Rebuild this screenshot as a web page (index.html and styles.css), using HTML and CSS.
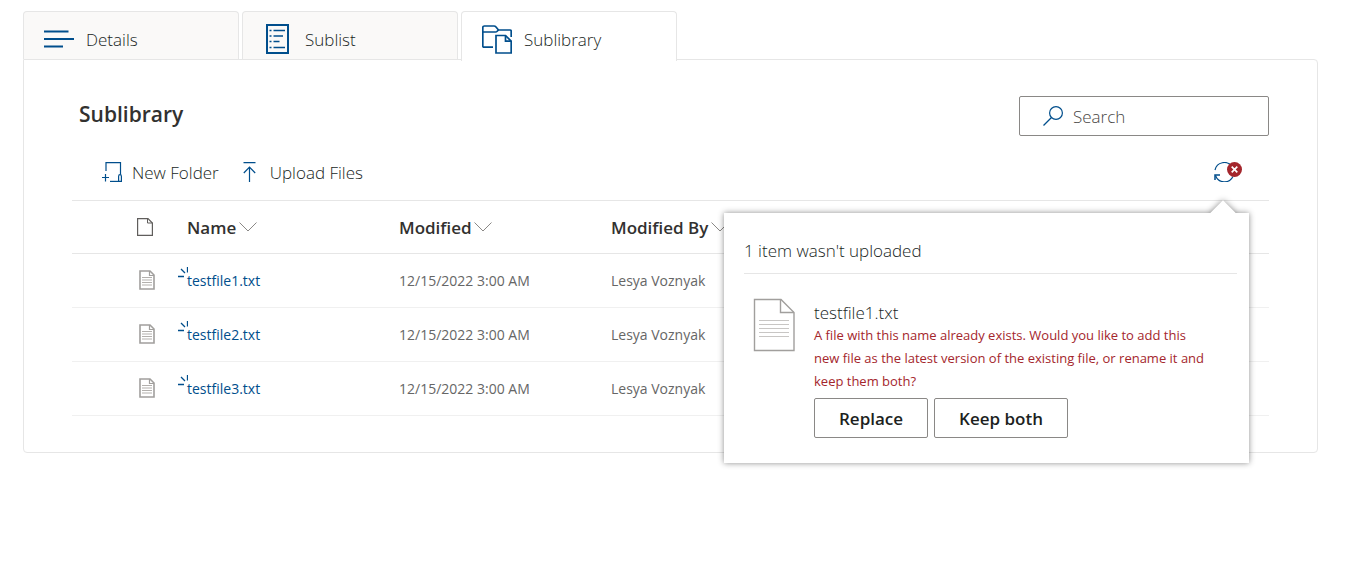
FILE: index.html
```html
<!DOCTYPE html>
<html lang="en">
<head>
    <meta charset="UTF-8">
    <meta name="viewport" content="width=device-width, initial-scale=1.0">
    <title>Sublibrary</title>
    <link rel="stylesheet" href="styles.css">
</head>
<body>

<!-- Shared icons -->
<svg class="sprite" aria-hidden="true">
    <symbol id="txt-file" viewBox="0 0 16 20">
        <path d="M1 1h10l4 4v14H1z" fill="#fff" stroke="#a19f9d" stroke-width="1.6"/>
        <path d="M10.500 1v4.500H15" fill="none" stroke="#a19f9d" stroke-width="1.2"/>
        <path d="M3 7.500h10M3 10h10M3 12.500h10M3 15h10" stroke="#b3b0ad"/>
    </symbol>
    <symbol id="new-item" viewBox="0 0 10 11">
        <path d="M9.500 0v5.500M3 2l4 4M0 9.500h6" fill="none" stroke="#004e8c" stroke-width="1.3"/>
    </symbol>
    <symbol id="chevron" viewBox="0 0 18 10">
        <path d="M.5.5L9 9l8.500-8.500" fill="none" stroke="#8a8886"/>
    </symbol>
</svg>

<main class="page">
    <div class="tabs" role="tablist">
        <button class="tab" type="button" role="tab" aria-selected="false">
            <svg class="tab-icon" viewBox="0 0 30 32" aria-hidden="true">
                <path d="M0 7.500h24.500M0 15h30M0 22.500h19" stroke="#004e8c" stroke-width="1.800"/>
            </svg>
            Details
        </button>
        <button class="tab" type="button" role="tab" aria-selected="false">
            <svg class="tab-icon" viewBox="0 0 30 32" aria-hidden="true">
                <path d="M4 1h21v28H4z" fill="none" stroke="#004e8c" stroke-width="2"/>
                <path d="M6.500 6.500h2M10.500 6.500H22M6.500 12h2M10.500 12H20M6.500 17.500h2M10.500 17.500h6M6.500 23.500h2M10.500 23.500H22" stroke="#004e8c" stroke-width="1.700"/>
            </svg>
            Sublist
        </button>
        <button class="tab active" type="button" role="tab" aria-selected="true">
            <svg class="tab-icon" viewBox="0 0 30 32" aria-hidden="true">
                <g fill="none" stroke="#004e8c" stroke-width="1.700">
                    <path d="M11 23.200H2Q.8 23.200.8 22V3.500Q.8 2 2.300 2H12q1.200 0 2 1l2.500 3H28q1.200 0 1.200 1.200V13"/>
                    <path d="M1 8h12.500q1 0 1.700-.8l1.300-1.400"/>
                    <path d="M14 11.500h9.500l5.700 5.700V29H14z"/>
                    <path d="M23.500 11.500v5.700h5.700"/>
                </g>
            </svg>
            Sublibrary
        </button>
    </div>

    <section class="panel" role="tabpanel">
        <div class="panel-head">
            <h1 class="title">Sublibrary</h1>
            <label class="search">
                <svg class="search-icon" viewBox="0 0 20 20" aria-hidden="true">
                    <circle cx="13" cy="7" r="6.400" fill="none" stroke="#004e8c" stroke-width="1.200"/>
                    <path d="M8.500 11.500L.5 19.500" stroke="#004e8c" stroke-width="1.300"/>
                </svg>
                <input class="search-input" type="search" placeholder="Search" aria-label="Search">
            </label>
        </div>

        <div class="toolbar">
            <button class="command" type="button">
                <svg class="command-icon" viewBox="0 0 20 20" aria-hidden="true">
                    <g fill="none" stroke="#004e8c" stroke-width="1.200">
                        <path d="M4 9V.6h14.500v12"/>
                        <path d="M8 19.400h9"/>
                        <path d="M0 15.500h7M3.500 12v7.500"/>
                        <path d="M16.600 19.400v-5q0-1.800 1.400-1.800t1.400 1.800v5z"/>
                    </g>
                </svg>
                New Folder
            </button>
            <button class="command" type="button">
                <svg class="command-icon" viewBox="-3 0 20 20" aria-hidden="true">
                    <path d="M.5.700h12M6.500 20V5M.8 11l5.700-6 5.700 6" fill="none" stroke="#004e8c" stroke-width="1.200"/>
                </svg>
                Upload Files
            </button>

            <div class="status">
                <button class="status-button" type="button" aria-label="Upload status">
                    <svg class="status-icon" viewBox="0 0 28 20" aria-hidden="true">
                        <g fill="none" stroke="#004e8c" stroke-width="1.200">
                            <path d="M1 8A9.500 9.500 0 0 1 18 4.500"/>
                            <path d="M19 14.500A9.500 9.500 0 0 1 1.500 13.500"/>
                            <path d="M1 18v-5h5" stroke-width="1.500"/>
                        </g>
                        <circle cx="20.500" cy="7.500" r="7.500" fill="#a4262c"/>
                        <path d="M17.700 4.700l5.600 5.600M23.300 4.700l-5.600 5.600" stroke="#fff" stroke-width="1.700"/>
                    </svg>
                </button>

                <div class="callout" role="dialog" aria-label="Upload result">
                    <div class="callout-body">
                        <h2 class="callout-title">1 item wasn't uploaded</h2>
                        <div class="upload">
                            <svg class="upload-icon" viewBox="0 0 42 54" aria-hidden="true">
                                <path d="M1.500 1.500h26.500l13 13V52.500H1.500z" fill="#fff" stroke="#a19f9d" stroke-width="1.400"/>
                                <path d="M27.500 1.500v13H41" fill="none" stroke="#a19f9d" stroke-width="1.400"/>
                                <path d="M6 22.500h30M6 26.500h30M6 30.500h30M6 34.500h30M6 38.500h30" stroke="#c8c6c4"/>
                            </svg>
                            <div class="upload-text">
                                <h3 class="upload-name">testfile1.txt</h3>
                                <p class="upload-error">A file with this name already exists. Would you like to add this new file as the latest version of the existing file, or rename it and keep them both?</p>
                                <div class="actions">
                                    <button class="action" type="button">Replace</button>
                                    <button class="action" type="button">Keep both</button>
                                </div>
                            </div>
                        </div>
                    </div>
                </div>
            </div>
        </div>

        <table class="files">
            <thead>
                <tr>
                    <th class="col-icon" aria-label="File type">
                        <svg class="head-icon" viewBox="0 0 16 18" aria-hidden="true">
                            <path d="M.6.6H11l4.400 4.400v12.400H.6z" fill="none" stroke="#605e5c" stroke-width="1.200"/>
                            <path d="M10.500.6V5h4.900" fill="none" stroke="#605e5c"/>
                        </svg>
                    </th>
                    <th class="col-data">Name <svg class="chevron" aria-hidden="true"><use href="#chevron"/></svg></th>
                    <th class="col-data">Modified <svg class="chevron" aria-hidden="true"><use href="#chevron"/></svg></th>
                    <th>Modified By <svg class="chevron" aria-hidden="true"><use href="#chevron"/></svg></th>
                </tr>
            </thead>
            <tbody>
                <tr>
                    <td class="col-icon"><svg class="file-icon" aria-hidden="true"><use href="#txt-file"/></svg></td>
                    <td><a class="file-link" href="#"><svg class="new-mark" aria-hidden="true"><use href="#new-item"/></svg>testfile1.txt</a></td>
                    <td>12/15/2022 3:00 AM</td>
                    <td>Lesya Voznyak</td>
                </tr>
                <tr>
                    <td class="col-icon"><svg class="file-icon" aria-hidden="true"><use href="#txt-file"/></svg></td>
                    <td><a class="file-link" href="#"><svg class="new-mark" aria-hidden="true"><use href="#new-item"/></svg>testfile2.txt</a></td>
                    <td>12/15/2022 3:00 AM</td>
                    <td>Lesya Voznyak</td>
                </tr>
                <tr>
                    <td class="col-icon"><svg class="file-icon" aria-hidden="true"><use href="#txt-file"/></svg></td>
                    <td><a class="file-link" href="#"><svg class="new-mark" aria-hidden="true"><use href="#new-item"/></svg>testfile3.txt</a></td>
                    <td>12/15/2022 3:00 AM</td>
                    <td>Lesya Voznyak</td>
                </tr>
            </tbody>
        </table>
    </section>
</main>

</body>
</html>
```
FILE: styles.css
```css
* {
    margin: 0;
    padding: 0;
    box-sizing: border-box;
}

body {
    background-color: #fff;
    color: #201f1e;
    font-family: "Segoe UI", "Open Sans", "Noto Sans", sans-serif;
    font-size: 17px;
    font-weight: 300;
}

button, input {
    font: inherit;
    color: inherit;
}

button {
    cursor: pointer;
}

svg {
    flex-shrink: 0;
}

.sprite {
    position: absolute;
    width: 0;
    height: 0;
}

.page {
    padding: 11px 32px 32px 23px;
}

/* Tabs */
.tabs {
    display: flex;
    gap: 3px;
}

.tab {
    display: flex;
    align-items: center;
    gap: 12px;
    width: 216px;
    height: 48px;
    padding: 8px 20px 0;
    background-color: #faf9f8;
    border: 1px solid #e6e6e6;
    border-bottom: none;
    border-radius: 4px 4px 0 0;
}

.tab.active {
    position: relative;
    height: 50px;
    margin-bottom: -2px;
    padding-bottom: 2px;
    background-color: #fff;
}

.tab-icon {
    width: 30px;
    height: 32px;
}

/* Panel */
.panel {
    padding: 36px 48px;
    border: 1px solid #e6e6e6;
    border-radius: 0 4px 4px 4px;
}

.panel-head {
    display: flex;
    justify-content: space-between;
    align-items: flex-start;
    padding-left: 7px;
}

.title {
    color: #323130;
    font-size: 21px;
    font-weight: 600;
    line-height: 36px;
}

.search {
    display: flex;
    align-items: center;
    gap: 10px;
    width: 250px;
    height: 40px;
    padding: 0 23px;
    border: 1px solid #8a8886;
    border-radius: 2px;
}

.search-icon {
    width: 20px;
    height: 20px;
}

.search-input {
    width: 100%;
    border: none;
    outline: none;
    background: none;
}

.search-input::placeholder {
    color: #484644;
}

.toolbar {
    display: flex;
    align-items: center;
    gap: 21px;
    height: 64px;
    padding: 8px 27px 0 30px;
}

.command {
    display: flex;
    align-items: center;
    gap: 10px;
    border: none;
    background: none;
}

.command-icon {
    width: 20px;
    height: 20px;
}

/* Upload status and its callout */
.status {
    position: relative;
    margin-left: auto;
}

.status-button {
    display: block;
    border: none;
    background: none;
}

.status-icon {
    display: block;
    width: 28px;
    height: 20px;
}

.callout {
    position: absolute;
    top: 51px;
    right: -7px;
    z-index: 1;
    width: 525px;
    box-shadow: 0 0 6px rgba(0, 0, 0, 0.45);
}

.callout::before {
    content: "";
    position: absolute;
    top: -9px;
    right: 17px;
    width: 18px;
    height: 18px;
    background-color: #fff;
    box-shadow: 0 0 6px rgba(0, 0, 0, 0.45);
    transform: rotate(45deg);
}

.callout-body {
    position: relative;
    padding: 20px 12px 25px 20px;
    background-color: #fff;
}

.callout-title {
    padding: 6px 0 10px;
    border-bottom: 1px solid #e6e6e6;
    font-size: 17px;
    font-weight: 300;
    line-height: 24px;
}

.upload {
    display: flex;
    gap: 19px;
    padding: 24px 30px 0 9px;
}

.upload-icon {
    width: 42px;
    height: 54px;
}

.upload-name {
    padding-top: 4px;
    font-size: 17px;
    font-weight: 300;
    line-height: 22px;
}

.upload-error {
    color: #a4262c;
    font-size: 13px;
    font-weight: 400;
    line-height: 23px;
}

.actions {
    display: flex;
    gap: 6px;
    padding-top: 5px;
}

.action {
    height: 40px;
    padding: 0 24px;
    background-color: #fff;
    border: 1px solid #8a8886;
    border-radius: 2px;
    font-weight: 600;
}

/* File list */
.files {
    width: 100%;
    table-layout: fixed;
    border-collapse: collapse;
    border-top: 1px solid #e6e6e6;
    text-align: left;
}

.files th {
    height: 53px;
    border-bottom: 1px solid #e6e6e6;
    color: #323130;
    font-weight: 600;
    white-space: nowrap;
}

.files td {
    height: 54px;
    padding-bottom: 1px;
    border-bottom: 1px solid #f0f0f0;
    color: #666;
    font-size: 14px;
    font-weight: 400;
}

.files .col-icon {
    width: 115px;
    padding-left: 65px;
}

.files .col-data {
    width: 212px;
}

.head-icon {
    display: block;
    width: 16px;
    height: 18px;
}

.chevron {
    width: 18px;
    height: 10px;
    margin-left: -2px;
    vertical-align: 2px;
}

.file-icon {
    display: block;
    width: 20px;
    height: 20px;
}

.file-link {
    position: relative;
    color: #004e8c;
    text-decoration: none;
}

.new-mark {
    position: absolute;
    top: -4px;
    left: -9px;
    width: 10px;
    height: 11px;
}
```
